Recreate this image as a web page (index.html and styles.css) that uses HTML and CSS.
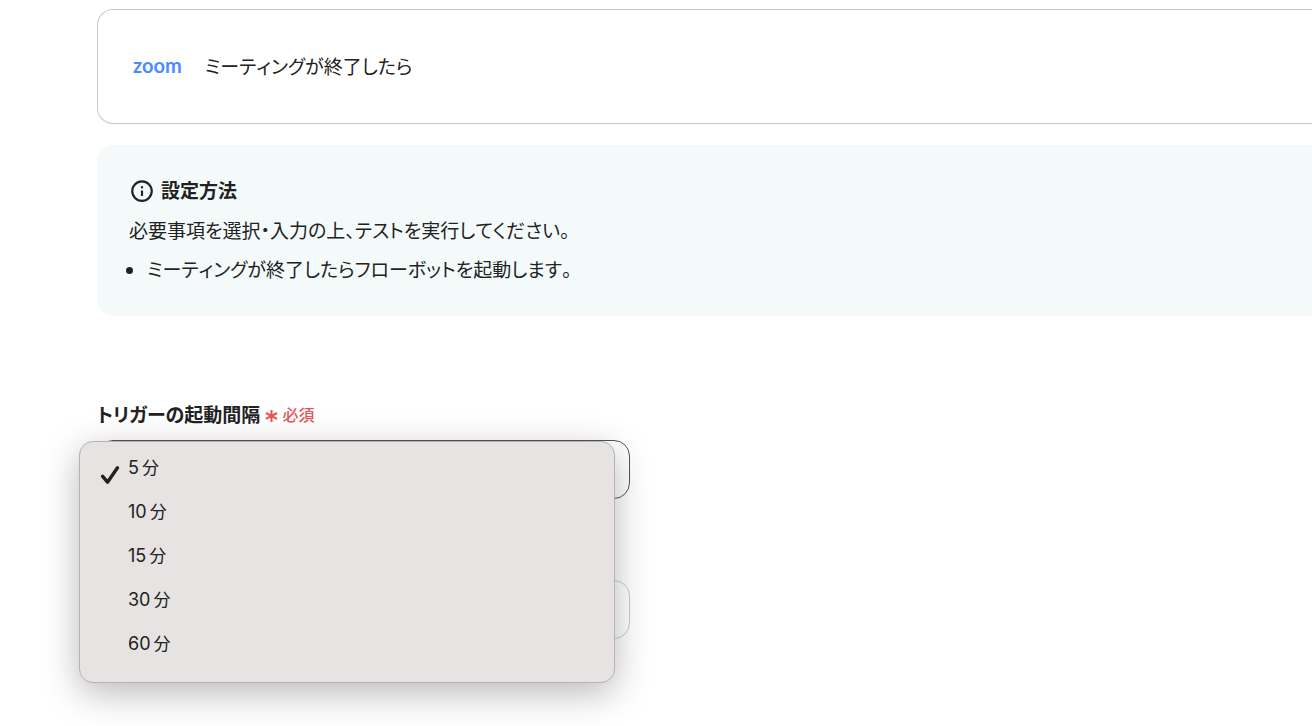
FILE: index.html
```html
<!DOCTYPE html>
<html lang="ja">

<head>
    <meta charset="UTF-8">
    <title>トリガーの設定</title>
    <link rel="stylesheet" href="styles.css">
</head>

<body>
    <main class="container">
        <!-- Trigger -->
        <section class="trigger-card">
            <span class="zoom-logo">zoom</span>
            <p>ミーティングが終了したら</p>
        </section>

        <!-- How to set up -->
        <section class="info-box">
            <h2>
                <svg class="info-icon" viewBox="0 0 24 24" fill="none" stroke="currentColor" stroke-width="2" aria-hidden="true">
                    <circle cx="12" cy="13" r="9" />
                    <path d="M12 12.5v5" />
                    <path d="M12 8.5v2" />
                </svg>
                設定方法
            </h2>
            <p>必要事項を選択・入力の上、テストを実行してください。</p>
            <ul>
                <li>ミーティングが終了したらフローボットを起動します。</li>
            </ul>
        </section>

        <!-- Settings -->
        <form class="settings">
            <div class="form-group">
                <label for="interval">
                    トリガーの起動間隔
                    <span class="required">
                        <svg class="required-icon" viewBox="0 0 14 14" fill="none" stroke="currentColor" stroke-width="2.2" aria-hidden="true">
                            <path d="M7 1v13M1 4.3l12 6.4M13 4.3l-12 6.4" />
                        </svg>
                        必須
                    </span>
                </label>
                <div class="select-wrap">
                    <select id="interval" class="field active">
                        <option selected>5分</option>
                        <option>10分</option>
                        <option>15分</option>
                        <option>30分</option>
                        <option>60分</option>
                    </select>
                    <div class="menu" role="listbox" aria-label="トリガーの起動間隔">
                        <button type="button" class="menu-item" role="option" aria-selected="true">
                            <svg class="check" viewBox="0 0 20 20" fill="none" stroke="currentColor" stroke-width="3.4" stroke-linecap="round" stroke-linejoin="round" aria-hidden="true">
                                <path d="M2.5 11.2l5 6L17.5 2.8" />
                            </svg>
                            <span class="num">5</span>分
                        </button>
                        <button type="button" class="menu-item" role="option"><span class="num">10</span>分</button>
                        <button type="button" class="menu-item" role="option"><span class="num">15</span>分</button>
                        <button type="button" class="menu-item" role="option"><span class="num">30</span>分</button>
                        <button type="button" class="menu-item" role="option"><span class="num">60</span>分</button>
                    </div>
                </div>
            </div>
            <input type="text" class="field" aria-label="設定値">
        </form>
    </main>
</body>

</html>
```
FILE: styles.css
```css
* {
    margin: 0;
    padding: 0;
    box-sizing: border-box;
}

body {
    font-family: 'Noto Sans CJK JP', sans-serif;
    font-size: 19px;
    line-height: 28px;
    font-feature-settings: 'palt';
    background-color: #ffffff;
    color: #222222;
}

.container {
    min-height: 100vh;
    padding: 9px 0 40px 97px;
}

p,
li {
    font-kerning: none;
}

.trigger-card {
    display: flex;
    align-items: center;
    gap: 23px;
    padding: 42px 35px 43px;
    border: 1px solid #c8c8c8;
    border-right: none;
    border-radius: 16px 0 0 16px;
}

.zoom-logo {
    padding-bottom: 3px;
    font-family: Lato, sans-serif;
    font-size: 20px;
    line-height: 24px;
    font-weight: 700;
    color: #4a8cff;
}

.info-box {
    margin-top: 21px;
    padding: 31px 32px 33px;
    border-radius: 16px 0 0 16px;
    background: #f4fafa;
}

.info-box h2 {
    display: flex;
    align-items: center;
    gap: 6px;
    margin-bottom: 12px;
    font-size: 19px;
    font-weight: 700;
}

.info-icon {
    width: 26px;
    height: 26px;
}

.info-box ul {
    margin-top: 11px;
    padding-left: 18px;
}

.settings {
    margin-top: 83px;
}

label {
    display: flex;
    align-items: center;
    gap: 5px;
    margin-bottom: 12px;
    font-weight: 700;
}

.required {
    display: flex;
    align-items: center;
    gap: 4px;
    padding-top: 1px;
    font-size: 16px;
    font-weight: 500;
    color: #e8545a;
}

.required-icon {
    width: 13px;
    height: 13px;
    margin-top: 3px;
}

.select-wrap {
    position: relative;
    width: 533px;
    max-width: 100%;
    margin-bottom: 81px;
}

.field {
    display: block;
    width: 533px;
    max-width: 100%;
    height: 59px;
    padding: 0 16px;
    border: 1px solid #c5ccd0;
    border-radius: 16px;
    background: #ffffff;
    font: inherit;
    color: inherit;
    appearance: none;
}

.field.active {
    border-color: #555555;
}

.menu {
    position: absolute;
    top: 1px;
    left: -18px;
    right: 15px;
    padding: 5px 0 15px;
    border: 1px solid #b4b2b2;
    border-radius: 14px;
    background: #e6e3e2;
    box-shadow: 0 10px 36px rgba(0, 0, 0, 0.28);
}

.menu-item {
    position: relative;
    display: flex;
    align-items: baseline;
    gap: 3px;
    width: 100%;
    height: 44px;
    padding: 6px 0 0 48px;
    border: none;
    background: none;
    font-family: 'Noto Sans CJK JP', sans-serif;
    font-size: 17px;
    font-weight: 400;
    line-height: 28px;
    color: #222222;
}

.menu-item .num {
    font-family: Inter, sans-serif;
    font-size: 18px;
}

.check {
    position: absolute;
    top: 18px;
    left: 20px;
    width: 20px;
    height: 20px;
}
```
